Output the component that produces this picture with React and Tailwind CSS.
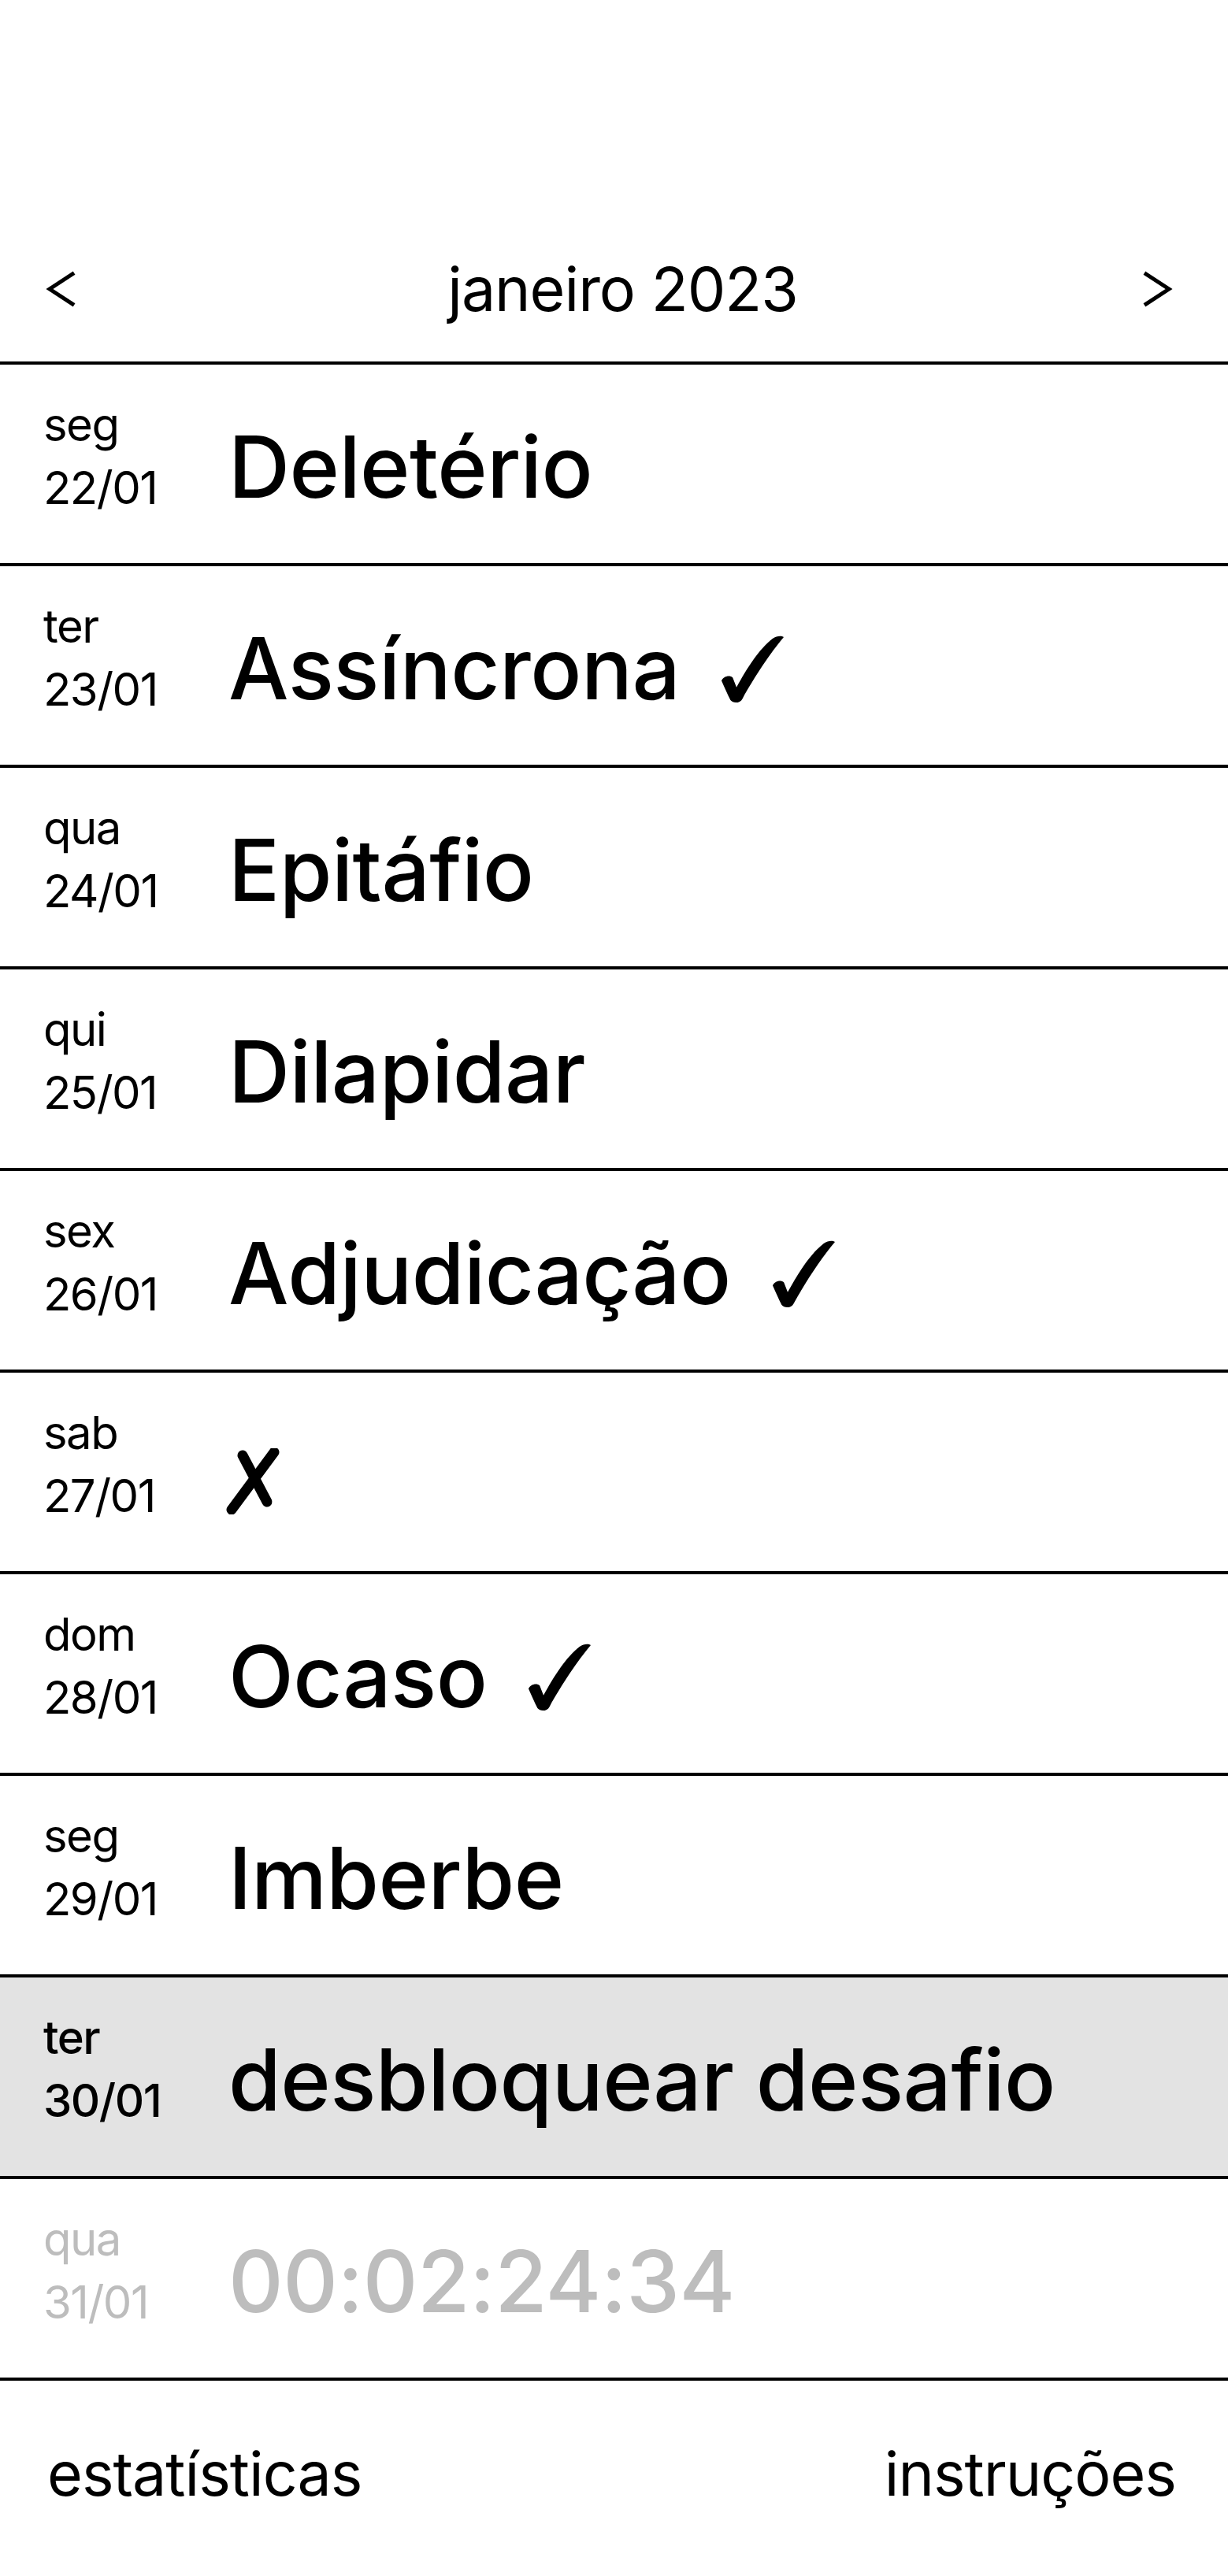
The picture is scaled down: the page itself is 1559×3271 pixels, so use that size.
import React from "react";

const days = [
  { dow: "seg", date: "22/01", word: "Deletério" },
  { dow: "ter", date: "23/01", word: "Assíncrona", mark: "check" },
  { dow: "qua", date: "24/01", word: "Epitáfio" },
  { dow: "qui", date: "25/01", word: "Dilapidar" },
  { dow: "sex", date: "26/01", word: "Adjudicação", mark: "check" },
  { dow: "sab", date: "27/01", word: "", mark: "cross" },
  { dow: "dom", date: "28/01", word: "Ocaso", mark: "check" },
  { dow: "seg", date: "29/01", word: "Imberbe" },
  { dow: "ter", date: "30/01", word: "desbloquear desafio", today: true },
  { dow: "qua", date: "31/01", word: "00:02:24:34", locked: true },
];

function Chevron({ dir }) {
  return (
    <svg width="40" height="46" viewBox="0 0 40 46" fill="none">
      <polyline
        points={dir === "left" ? "34,4 5,23 34,42" : "6,4 35,23 6,42"}
        stroke="#000"
        strokeWidth="5"
        strokeLinecap="square"
        strokeLinejoin="miter"
      />
    </svg>
  );
}

// brush style check, like the ✓ glyph in the screenshot
function CheckMark() {
  return (
    <svg
      width="80"
      height="86"
      viewBox="0 0 84 90"
      className="inline-block ml-[52px] align-[-5px]"
    >
      <path
        d="M1 60 C4 54 12 52 16 56 L21 69 C35 43 52 17 69 4 C75 0 81 0 84 2 C67 22 45 55 29 84 C26 90 17 91 13 86 C9 78 5 69 1 60 Z"
        fill="#000"
      />
    </svg>
  );
}

function CrossMark() {
  return (
    <svg
      width="70"
      height="84"
      viewBox="0 0 70 84"
      className="inline-block -ml-[4px] align-[-11px]"
    >
      <path d="M62 5 L8 78" stroke="#000" strokeWidth="13" strokeLinecap="round" />
      <path d="M22 9 L53 68" stroke="#000" strokeWidth="13" strokeLinecap="round" />
    </svg>
  );
}

function DayRow({ day }) {
  const labelColor = day.locked ? "text-[#bdbdbd]" : "text-black";
  return (
    <div
      className={`flex items-center h-[256px] border-b-4 border-black pl-[55px] ${
        day.today ? "bg-[#e3e3e3]" : "bg-white"
      }`}
    >
      {/* date column */}
      <div
        className={`w-[235px] shrink-0 pb-[20px] text-[58px] leading-[80px] tracking-[-1.5px] ${labelColor} ${
          day.today ? "font-medium" : "font-normal"
        }`}
      >
        <div>{day.dow}</div>
        <div>{day.date}</div>
      </div>

      <div
        className={`pt-[8px] text-[108px] leading-none font-medium tracking-[-0.5px] whitespace-nowrap ${
          day.locked ? "text-[#bdbdbd]" : "text-black"
        }`}
      >
        {day.word && <span>{day.word}</span>}
        {day.mark === "check" && <CheckMark />}
        {day.mark === "cross" && <CrossMark />}
      </div>
    </div>
  );
}

export default function App() {
  return (
    <div className="w-[1559px] min-h-[3271px] bg-white text-black font-['Inter','Noto_Sans',sans-serif]">
      {/* month header */}
      <div className="h-[463px] border-b-4 border-black flex items-end">
        <div className="h-[184px] w-full flex items-center justify-between pl-[58px] pr-[70px]">
          <button className="flex items-center">
            <Chevron dir="left" />
          </button>
          <div className="pl-[34px] text-[77px] leading-none font-normal tracking-[-1px]">
            janeiro 2023
          </div>
          <button className="flex items-center">
            <Chevron dir="right" />
          </button>
        </div>
      </div>

      {days.map((d) => (
        <DayRow key={d.date} day={d} />
      ))}

      {/* footer links */}
      <div className="h-[247px] flex items-center justify-between pl-[60px] pr-[66px] pb-[10px] text-[77px] leading-none font-normal tracking-[-1px]">
        <span>estatísticas</span>
        <span>instruções</span>
      </div>
    </div>
  );
}
